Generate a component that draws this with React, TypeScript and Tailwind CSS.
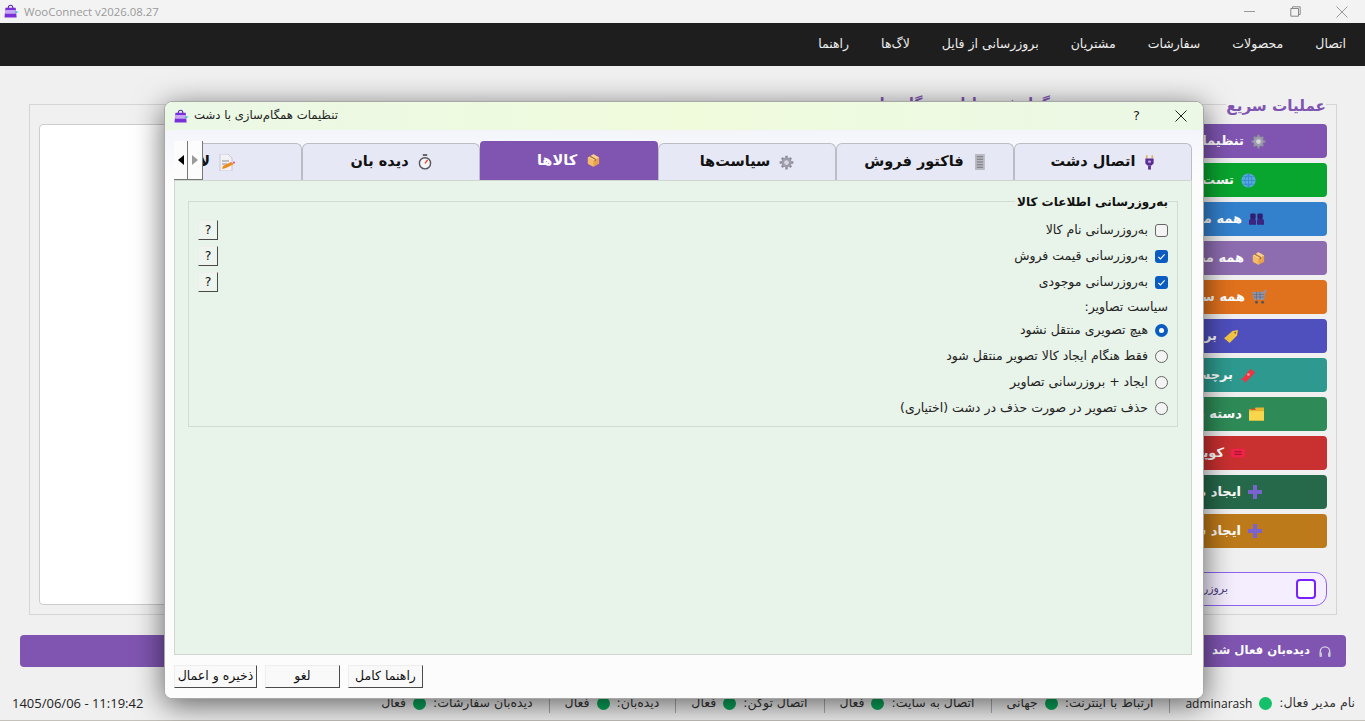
import type { ReactNode } from 'react';

const Logo = () => (
  <svg viewBox="0 0 16 15" className="w-[15px] h-[14px] shrink-0">
    <path d="M4.5 4.5 C4.5 0.2 9.5 0.2 9.5 4.5" fill="none" stroke="#5b2aa8" strokeWidth="1.2" />
    <path d="M1.5 4 H12.5 L13.5 14.5 H0.5 Z" fill="#7a30d8" />
    <rect x="1" y="6.5" width="12" height="4" rx="1" fill="#c9a6f5" />
    <path d="M12 7.5 L16 8.5 L12 10 Z" fill="#35c2c9" />
  </svg>
);

const Gear = () => (
  <svg viewBox="0 0 24 24" className="w-[15px] h-[15px] shrink-0">
    <g stroke="#8d8d9c" strokeWidth="4">
      <path d="M12 1v22M1 12h22M4.5 4.5l15 15M19.5 4.5l-15 15" />
    </g>
    <circle cx="12" cy="12" r="8" fill="#9c9cab" />
    <circle cx="12" cy="12" r="3.8" fill="#d7d7e2" />
  </svg>
);

const Box = () => (
  <svg viewBox="0 0 24 24" className="w-[15px] h-[15px] shrink-0">
    <path d="M12 2l9 5v10l-9 5-9-5V7z" fill="#e9a34f" />
    <path d="M12 12v10l-9-5V7z" fill="#f4bb6c" />
    <path d="M3 7l9-5 9 5-9 5z" fill="#f8cf90" />
    <path d="M7 4.5l9 5v3l-2 1v-3l-9-5z" fill="#a5703a" />
  </svg>
);

const Plug = () => (
  <svg viewBox="0 0 16 22" className="w-[11px] h-[16px] shrink-0">
    <path d="M4 1v5M12 1v5" stroke="#e0b060" strokeWidth="2.4" />
    <path d="M2 6h12v7l-3 3H5l-3-3z" fill="#5a2d91" />
    <rect x="6" y="9" width="4" height="3" fill="#c7a8ee" />
    <rect x="6" y="16" width="4" height="6" fill="#5a2d91" />
  </svg>
);

const Receipt = () => (
  <svg viewBox="0 0 14 18" className="w-[13px] h-[16px] shrink-0">
    <rect x="2" y="0" width="11" height="18" fill="#b9b9c2" />
    <path d="M4 3h7M4 6h7M4 9h7M4 12h7M4 15h7" stroke="#77777f" strokeWidth="1.2" />
  </svg>
);

const Watch = () => (
  <svg viewBox="0 0 16 18" className="w-[14px] h-[16px] shrink-0">
    <rect x="5.5" y="0" width="5" height="2" fill="#555" />
    <circle cx="8" cy="10.5" r="6.4" fill="#f4f4f6" stroke="#55555c" strokeWidth="1.6" />
    <path d="M8 10.5L11 6.5" stroke="#e4482f" strokeWidth="1.6" />
  </svg>
);

const Note = () => (
  <svg viewBox="0 0 16 17" className="w-[16px] h-[17px] shrink-0">
    <path d="M1 0h8l4 4v13H1z" fill="#f1f1f6" stroke="#c8c8d4" />
    <path d="M3 7h7M3 10h5" stroke="#8b8b96" />
    <path d="M3 15l1-3 8-4 3 2-8 4z" fill="#ef8a1f" />
    <circle cx="15" cy="8.5" r="1" fill="#ef3f8a" />
  </svg>
);

const Globe = () => (
  <svg viewBox="0 0 16 16" className="w-[15px] h-[15px] shrink-0">
    <circle cx="8" cy="8" r="7.5" fill="#57a9e6" />
    <path d="M1 8h14M8 1v14M2.5 4h11M2.5 12h11M8 1c-5 4-5 10 0 14M8 1c5 4 5 10 0 14" stroke="#2f7fc0" strokeWidth=".7" fill="none" />
  </svg>
);

const People = () => (
  <svg viewBox="0 0 18 14" className="w-[15px] h-[12px] shrink-0">
    <rect x="1.5" y="0.5" width="6.5" height="6.5" rx="1.5" fill="#2f1f70" />
    <rect x="10" y="0.5" width="6.5" height="6.5" rx="1.5" fill="#2f1f70" />
    <path d="M0 14V9c0-1 1-2 2-2h5c1 0 1.4 1 1.4 2v5zM9.6 14V9c0-1 .4-2 1.4-2h5c1 0 2 1 2 2v5z" fill="#3a2680" />
  </svg>
);

const Cart = () => (
  <svg viewBox="0 0 18 16" className="w-[16px] h-[14px] shrink-0">
    <path d="M0 2h13l1-2h3l-2 3-1 8H2z" fill="#8f95a8" />
    <path d="M1 5h13M2 8h12M5 2v9M9 2v9" stroke="#5d6478" strokeWidth=".7" />
    <circle cx="5" cy="14" r="1.6" fill="#555" />
    <circle cx="12" cy="14" r="1.6" fill="#555" />
  </svg>
);

const Tag = () => (
  <svg viewBox="0 0 16 14" className="w-[15px] h-[13px] shrink-0">
    <path d="M0 9L9 1l6-1-1 6-8 8z" fill="#f4c542" />
    <circle cx="12" cy="3" r="1" fill="#8a6a10" />
  </svg>
);

const Pin = () => (
  <svg viewBox="0 0 16 16" className="w-[15px] h-[15px] shrink-0">
    <path d="M0 12l3-1 8-10 3 2 2 2-9 9-1 2-2-3z" fill="#ef3340" />
    <circle cx="9" cy="7" r="1.4" fill="#f9a" />
  </svg>
);

const Folder = () => (
  <svg viewBox="0 0 16 14" className="w-[15px] h-[14px] shrink-0">
    <path d="M0 2h6l1-2h9v14H0z" fill="#e6b52e" />
    <rect x="0" y="4" width="16" height="10" fill="#f8d64e" />
    <path d="M2 2h5" stroke="#e24a3a" strokeWidth="1.2" />
  </svg>
);

const Coupon = () => (
  <svg viewBox="0 0 16 10" className="w-[14px] h-[10px] shrink-0">
    <rect x="0" y="0" width="16" height="10" rx="1.5" fill="#ef2348" />
    <path d="M4 3.5h8M4 6.5h8" stroke="#96122c" strokeWidth="1.2" />
  </svg>
);

const Plus = () => (
  <svg viewBox="0 0 14 14" className="w-[14px] h-[14px] shrink-0">
    <path d="M5 0h4v5h5v4H9v5H5V9H0V5h5z" fill="#7a63cf" />
  </svg>
);

const Headset = () => (
  <svg viewBox="0 0 14 14" className="w-[12px] h-[13px] shrink-0">
    <path d="M1.5 9V7a5.5 5.5 0 0111 0v2" fill="none" stroke="#d8d8de" strokeWidth="1.5" />
    <rect x="0.5" y="8" width="3" height="5.5" rx="1.2" fill="#c8c8d0" />
    <rect x="10.5" y="8" width="3" height="5.5" rx="1.2" fill="#c8c8d0" />
  </svg>
);

const menuItems = ['اتصال', 'محصولات', 'سفارشات', 'مشتریان', 'بروزرسانی از فایل', 'لاگ‌ها', 'راهنما'];

const quickActions: { label: string; icon: ReactNode; cls: string }[] = [
  { label: 'تنظیمات همگام‌سازی', icon: <Gear />, cls: 'bg-[#7f55b1] pr-[61px]' },
  { label: 'تست اتصال به دشت', icon: <Globe />, cls: 'bg-[#09a62f] pr-[71px]' },
  { label: 'همه مشتریان دشت', icon: <People />, cls: 'bg-[#3380cd] pr-[63px]' },
  { label: 'همه محصولات دشت', icon: <Box />, cls: 'bg-[#8e6cb0] pr-[61px]' },
  { label: 'همه سفارشات دشت', icon: <Cart />, cls: 'bg-[#e0711d] pr-[59px]' },
  { label: 'برندهای محصولات', icon: <Tag />, cls: 'bg-[#4f4fbe] pr-[88px]' },
  { label: 'برچسب‌های محصولات', icon: <Pin />, cls: 'bg-[#2e9a8f] pr-[72px]' },
  { label: 'دسته بندی محصولات', icon: <Folder />, cls: 'bg-[#2e8b57] pr-[63px]' },
  { label: 'کوپن‌های تخفیف', icon: <Coupon />, cls: 'bg-[#c93030] pr-[82px]' },
  { label: 'ایجاد محصول جدید', icon: <Plus />, cls: 'bg-[#26694a] pr-[65px]' },
  { label: 'ایجاد سفارش جدید', icon: <Plus />, cls: 'bg-[#bd7a1a] pr-[65px]' },
];

const statusItems = [
  { label: 'ارتباط با اینترنت:', value: 'جهانی' },
  { label: 'اتصال به سایت:', value: 'فعال' },
  { label: 'اتصال توکن:', value: 'فعال' },
  { label: 'دیده‌بان:', value: 'فعال' },
  { label: 'دیده‌بان سفارشات:', value: 'فعال' },
];

const tabs: { label: string; icon: ReactNode; active?: boolean }[] = [
  { label: 'اتصال دشت', icon: <Plug /> },
  { label: 'فاکتور فروش', icon: <Receipt /> },
  { label: 'سیاست‌ها', icon: <Gear /> },
  { label: 'کالاها', icon: <Box />, active: true },
  { label: 'دیده بان', icon: <Watch /> },
];

const checks = [
  { label: 'به‌روزرسانی نام کالا', on: false },
  { label: 'به‌روزرسانی قیمت فروش', on: true },
  { label: 'به‌روزرسانی موجودی', on: true },
];

const radios = [
  { label: 'هیچ تصویری منتقل نشود', on: true },
  { label: 'فقط هنگام ایجاد کالا تصویر منتقل شود', on: false },
  { label: 'ایجاد + بروزرسانی تصاویر', on: false },
  { label: 'حذف تصویر در صورت حذف در دشت (اختیاری)', on: false },
];

function ClassicButton({ children, className }: { children: ReactNode; className: string }) {
  return (
    <button className={`flex items-center justify-center border border-t-[#eeeeee] border-l-[#eeeeee] border-r-[#4a4a4a] border-b-[#4a4a4a] text-[12.5px] text-[#111] ${className}`}>
      {children}
    </button>
  );
}

function SettingsDialog() {
  return (
    <div className="absolute left-[164px] top-[101px] w-[1040px] h-[598px] flex flex-col rounded-[8px] border border-[#a8a8a8] bg-[#fcfcfd] shadow-[0_6px_30px_rgba(0,0,0,0.6)] overflow-hidden">
      <div className="h-[28px] shrink-0 flex items-center justify-between pl-[9px] pr-[16px] bg-gradient-to-r from-[#ebf8e6] via-[#f0fbdc] to-[#ebf8e6]">
        <div className="flex items-center gap-[5px]">
          <Logo />
          <span dir="rtl" className="text-[11.7px] text-[#222]">تنظیمات همگام‌سازی با دشت</span>
        </div>
        <div className="flex items-center gap-[35px]">
          <span className="text-[13px] text-[#222]">?</span>
          <svg viewBox="0 0 12 12" className="w-[12px] h-[12px]">
            <path d="M0.5 0.5l11 11M11.5 0.5l-11 11" stroke="#222" strokeWidth="1" />
          </svg>
        </div>
      </div>

      <div className="flex-1 flex flex-col pt-[11px] pl-[9px] pr-[11px] bg-gradient-to-b from-[#f3f5fb] to-[#fcfcfd] to-[8%]">
        <div dir="rtl" className="relative h-[39px] shrink-0 flex items-end overflow-hidden">
          {tabs.map((tab) => (
            <div
              key={tab.label}
              className={
                tab.active
                  ? 'w-[178px] h-[39px] shrink-0 flex items-center justify-center gap-[9px] bg-[#7f55b1] rounded-t-[4px] text-white text-[14.5px] font-bold'
                  : 'w-[178px] h-[37px] shrink-0 flex items-center justify-center gap-[9px] bg-[#e6e8f6] rounded-t-[6px] border border-b-0 border-[#bcbcc4] text-[#111] text-[14.5px] font-bold'
              }
            >
              {tab.icon}
              <span>{tab.label}</span>
            </div>
          ))}
          <div className="w-[178px] h-[37px] shrink-0 flex items-center gap-[9px] pr-[66px] bg-[#e6e8f6] rounded-t-[6px] border border-b-0 border-[#bcbcc4] text-[#111] text-[14.5px] font-bold whitespace-nowrap">
            <Note />
            <span>لاگ‌ها</span>
          </div>
          <div dir="ltr" className="absolute left-0 top-0 h-[39px] w-[29px] flex bg-[#fcfcfd] border-b border-[#777]">
            <div className="w-[14px] flex items-center justify-center border-r border-[#777]">
              <span className="w-0 h-0 border-y-[5px] border-y-transparent border-r-[6px] border-r-black" />
            </div>
            <div className="w-[15px] flex items-center justify-center border-r border-[#777]">
              <span className="w-0 h-0 border-y-[5px] border-y-transparent border-l-[6px] border-l-[#9a9a9a]" />
            </div>
          </div>
        </div>

        <div className="h-[475px] shrink-0 bg-[#e8f3e9] border border-[#cfd6d0] pt-[20px] px-[13px]">
          <div className="relative h-[226px] border border-[#cfdccf] flex justify-between pt-[18px] pr-[9px] pl-[9px]">
            <span dir="rtl" className="absolute -top-[8px] right-[9px] bg-[#e8f3e9] pl-[2px] text-[12px] font-bold text-[#111] leading-[16px]">
              به‌روزرسانی اطلاعات کالا
            </span>
            <div className="flex flex-col gap-[6px]">
              {checks.map((c) => (
                <ClassicButton key={c.label} className="w-[20px] h-[20px] bg-[#eef5ef]">?</ClassicButton>
              ))}
            </div>
            <div dir="rtl" className="flex flex-col text-[12.5px] text-[#222]">
              {checks.map((c) => (
                <div key={c.label} className="h-[26px] flex items-center gap-[7px] -mt-[3px] mb-[3px]">
                  <span
                    className={
                      c.on
                        ? 'w-[13px] h-[13px] rounded-[3px] bg-[#0b5cc0] flex items-center justify-center'
                        : 'w-[13px] h-[13px] rounded-[3px] bg-[#f4f4f4] border border-[#666]'
                    }
                  >
                    {c.on && (
                      <svg viewBox="0 0 10 10" className="w-[9px] h-[9px]">
                        <path d="M1.5 5.5l2.3 2.2 4.7-5" fill="none" stroke="#fff" strokeWidth="1.2" />
                      </svg>
                    )}
                  </span>
                  <span>{c.label}</span>
                </div>
              ))}
              <div className="h-[24px] flex items-center -mt-[3px] -mb-[2px]">سیاست تصاویر:</div>
              {radios.map((r) => (
                <div key={r.label} className="h-[26px] flex items-center gap-[7px]">
                  <span
                    className={
                      r.on
                        ? 'w-[13px] h-[13px] rounded-full bg-[#0b5cc0] flex items-center justify-center'
                        : 'w-[13px] h-[13px] rounded-full bg-[#f4f4f4] border border-[#666]'
                    }
                  >
                    {r.on && <span className="w-[5px] h-[5px] rounded-full bg-white" />}
                  </span>
                  <span>{r.label}</span>
                </div>
              ))}
            </div>
          </div>
        </div>

        <div className="flex gap-[8px] mt-[10px]">
          <ClassicButton className="w-[83px] h-[23px] bg-[#f9f9f9]">ذخیره و اعمال</ClassicButton>
          <ClassicButton className="w-[75px] h-[23px] bg-[#f9f9f9]">لغو</ClassicButton>
          <ClassicButton className="w-[75px] h-[23px] bg-[#f9f9f9]">راهنما کامل</ClassicButton>
        </div>
      </div>
    </div>
  );
}

export default function App() {
  return (
    <div className="relative h-[721px] w-[1365px] overflow-hidden flex flex-col bg-[#f0f0f0] font-['DejaVu_Sans',sans-serif]">
      <div className="h-[23px] shrink-0 flex items-center justify-between bg-[#f3f3f3] pl-[4px] pr-[17px]">
        <div className="flex items-center gap-[5px]">
          <Logo />
          <span className="font-['Open_Sans',sans-serif] text-[11.4px] text-[#9a9a9a]">WooConnect v2026.08.27</span>
        </div>
        <div className="flex items-center gap-[35px]">
          <span className="w-[11px] h-px bg-[#999]" />
          <svg viewBox="0 0 11 11" className="w-[11px] h-[11px]">
            <path d="M2.5 2.5V0.8h7.7v7.7H8.5M0.8 2.5h7.7v7.7H0.8z" fill="none" stroke="#888" />
          </svg>
          <svg viewBox="0 0 12 12" className="w-[12px] h-[12px]">
            <path d="M0.5 0.5l11 11M11.5 0.5l-11 11" stroke="#999" />
          </svg>
        </div>
      </div>

      <nav dir="rtl" className="h-[43px] shrink-0 flex items-center gap-[32px] bg-[#1e1e1e] pr-[19px] text-[12.5px] text-[#eeeeee]">
        {menuItems.map((m) => (
          <span key={m}>{m}</span>
        ))}
      </nav>

      <main className="flex-1 flex flex-col pt-[38px] pl-[20px] pr-[19px]">
        <div className="h-[511px] flex justify-between px-[9px]">
          <div className="relative w-[1042px] border border-[#d5d5d5] pt-[19px] pl-[9px] pr-[10px]">
            <span dir="rtl" className="absolute -top-[12px] right-[20px] bg-[#f0f0f0] text-[14px] font-bold text-[#7f55b1]">گزارش عملیات همگام‌سازی</span>
            <div className="h-[481px] bg-white border border-[#cccccc] rounded-[4px]" />
          </div>
          <div className="relative w-[256px] border border-[#d5d5d5] pt-[19px] px-[9px]">
            <span dir="rtl" className="absolute -top-[10px] right-[10px] bg-[#f0f0f0] text-[15.2px] font-bold text-[#7f55b1] leading-[22px]">عملیات سریع</span>
            <div dir="rtl" className="flex flex-col gap-[5px]">
              {quickActions.map((a) => (
                <div key={a.label} className={`h-[34px] flex items-center gap-[7px] rounded-[4px] text-white text-[13px] font-bold whitespace-nowrap overflow-hidden ${a.cls}`}>
                  {a.icon}
                  <span>{a.label}</span>
                </div>
              ))}
            </div>
            <div dir="rtl" className="mt-[24px] h-[34px] flex items-center gap-[68px] pr-[10px] rounded-[12px] border border-[#8f63f0] bg-[#f5eeff]">
              <span className="w-[20px] h-[20px] rounded-[4px] bg-white border-2 border-[#7a1fff]" />
              <span className="text-[11px] text-[#4a3a80]">بروزرسانی خودکار</span>
            </div>
          </div>
        </div>
        <div dir="rtl" className="mt-[20px] h-[32px] flex items-center gap-[9px] pr-[15px] rounded-[4px] bg-[#7f55b1] text-white text-[11.7px] font-bold">
          <Headset />
          <span>دیده‌بان فعال شد</span>
        </div>
      </main>

      <footer className="h-[38px] shrink-0 flex items-center justify-between pl-[12px] pr-[10px] pt-[4px] text-[#333] border-b border-[#c4c0ba]">
        <span className="font-['Open_Sans',sans-serif] text-[13px] text-[#222]">1405/06/06 - 11:19:42</span>
        <div dir="rtl" className="flex items-center gap-[15px] text-[12.5px]">
          <div className="flex items-center gap-[7px]">
            <span>نام مدیر فعال:</span>
            <span className="w-[13px] h-[13px] rounded-full bg-[#14c06a]" />
            <span className="font-['Open_Sans',sans-serif] text-[#222] text-[12px]">adminarash</span>
          </div>
          {statusItems.map((s) => (
            <div key={s.label} className="flex items-center gap-[7px] border-r border-[#aaa] pr-[16px]">
              <span>{s.label}</span>
              <span className="w-[13px] h-[13px] rounded-full bg-[#0aa85c]" />
              <span>{s.value}</span>
            </div>
          ))}
        </div>
      </footer>

      <SettingsDialog />
    </div>
  );
}
